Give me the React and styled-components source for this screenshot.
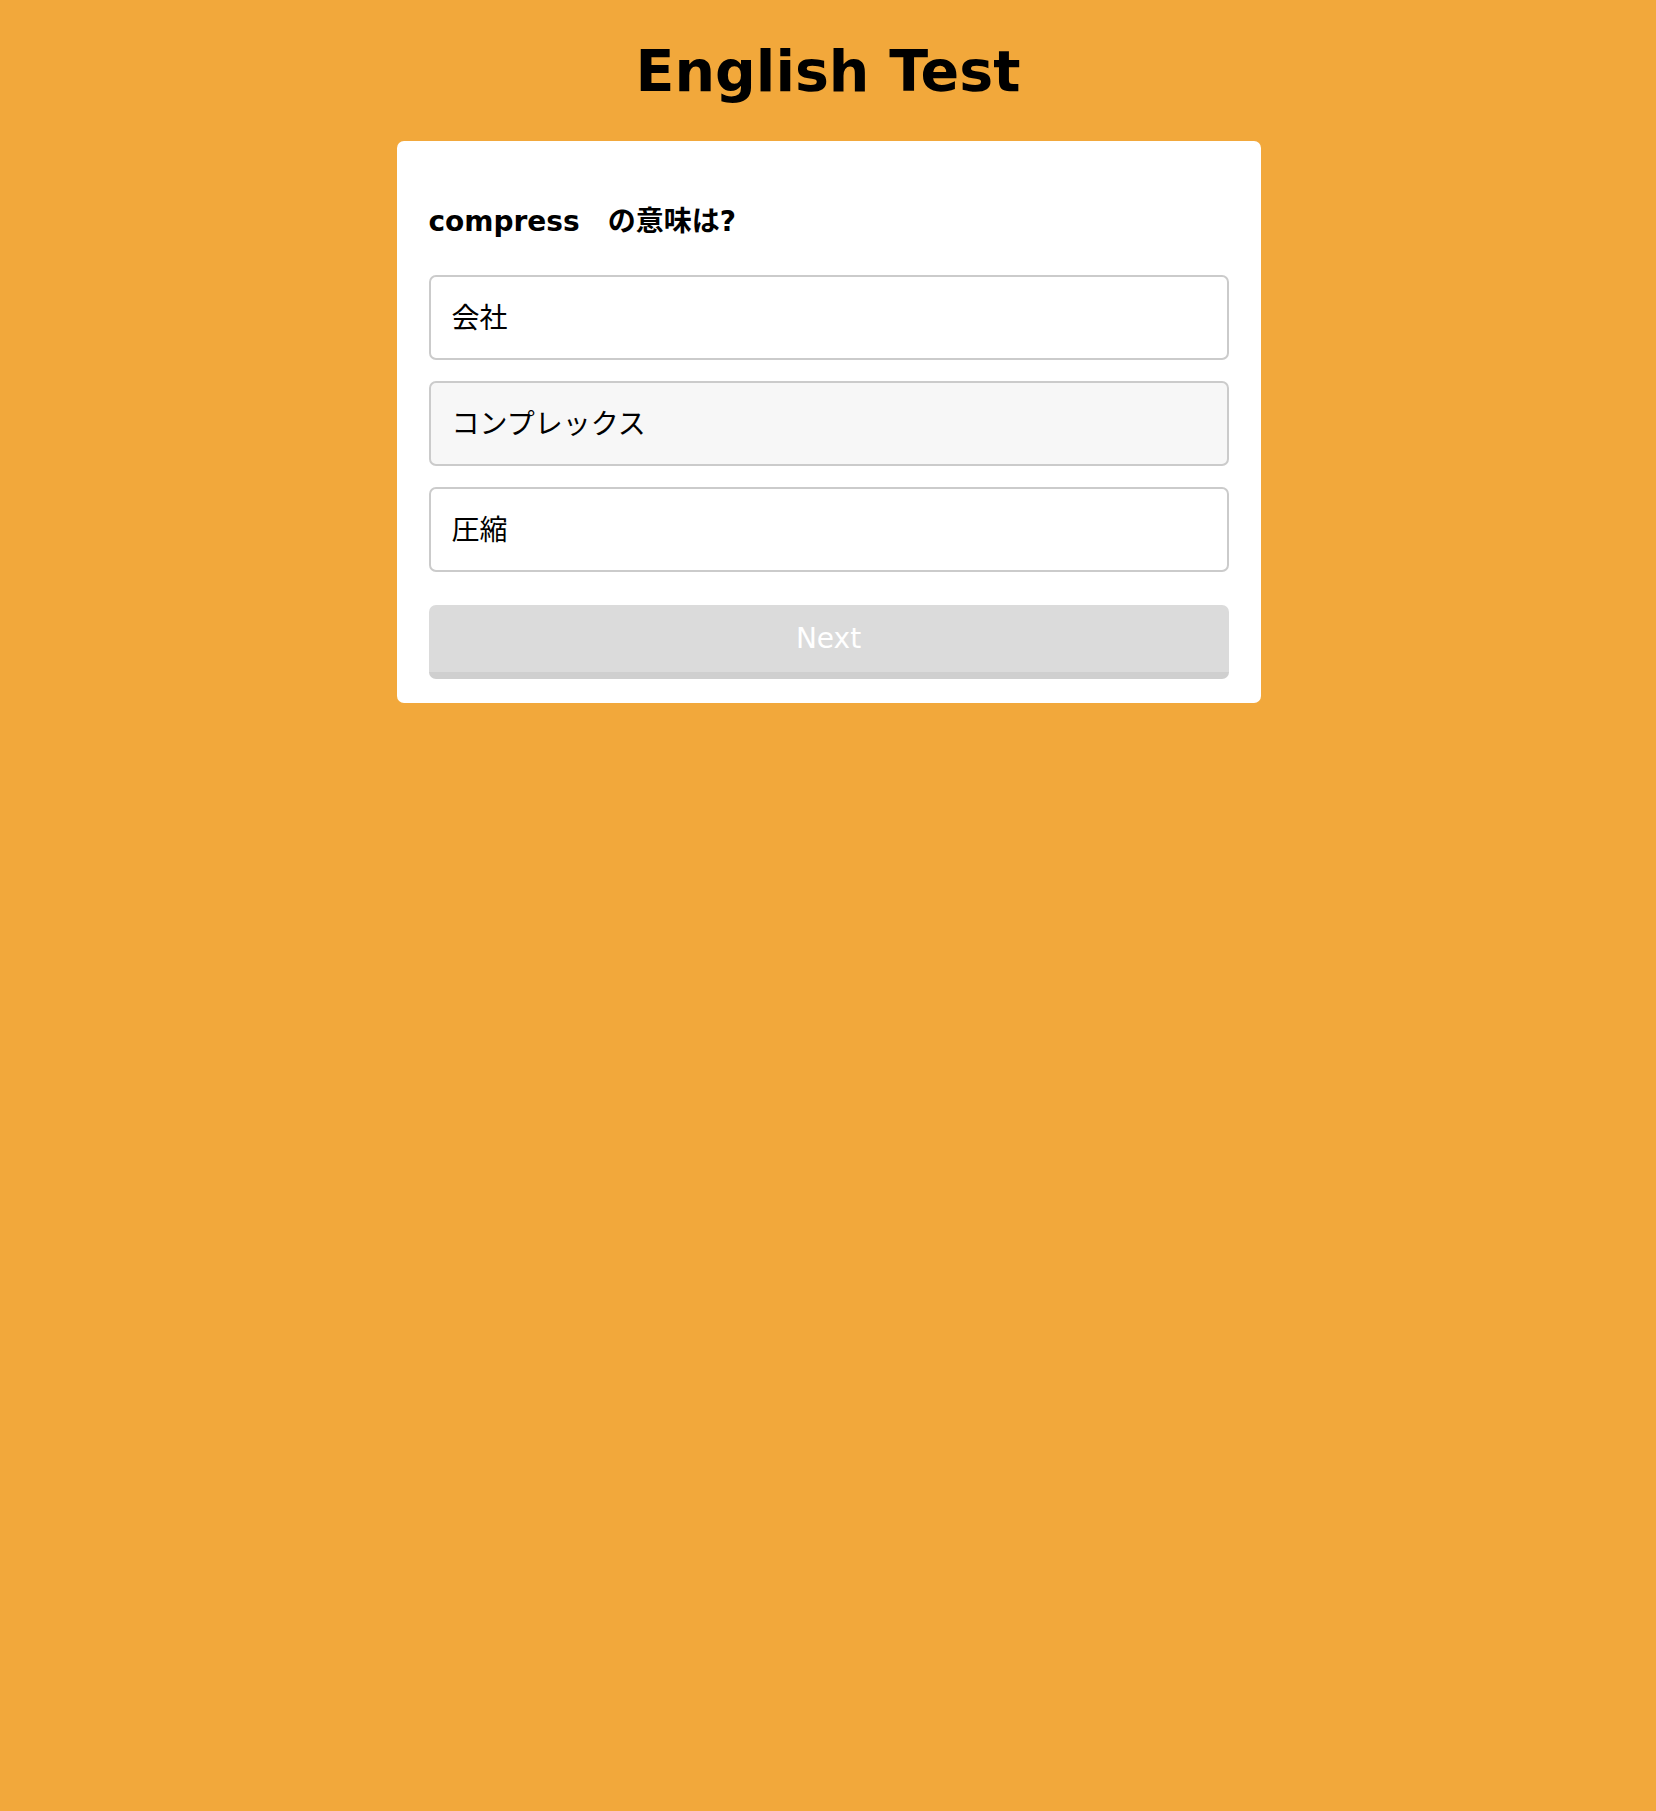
import React, { useState } from 'react';
import styled, { createGlobalStyle } from 'styled-components';

const GlobalStyle = createGlobalStyle`
  html, body {
    margin: 0;
    padding: 0;
    background: #f2a83b;
    min-height: 100%;
  }
  body {
    font-family: "DejaVu Sans", Verdana, "Noto Sans CJK JP", sans-serif;
    color: #000;
  }
`;

const Page = styled.div`
  min-height: 1811px;
  background: #f2a83b;
  display: flex;
  flex-direction: column;
  align-items: center;
  padding-top: 39px;
  box-sizing: border-box;
`;

const Title = styled.h1`
  margin: 0 0 37px;
  font-size: 57px;
  font-weight: bold;
  line-height: 65px;
`;

const Card = styled.div`
  width: 864px;
  box-sizing: border-box;
  background: #fff;
  border-radius: 7px;
  padding: 65px 32px 24px;
  margin-left: 1px;
`;

const Question = styled.h2`
  margin: 0 0 38px;
  font-size: 28px;
  line-height: 31px;
  font-weight: bold;
  font-family: "DejaVu Sans", "Noto Sans CJK JP", sans-serif;
`;

const Options = styled.div`
  display: flex;
  flex-direction: column;
  gap: 21px;
`;

const Option = styled.button`
  height: 85px;
  width: 100%;
  box-sizing: border-box;
  display: flex;
  align-items: center;
  padding: 0 21px 4px;
  border: 2px solid #cbcbcb;
  border-radius: 7px;
  background: ${p => (p.$active ? '#f7f7f7' : '#fff')};
  font-family: "DejaVu Sans", "Noto Sans CJK JP", sans-serif;
  font-size: 28px;
  color: #000;
  text-align: left;
  cursor: pointer;
`;

const NextButton = styled.button`
  margin-top: 33px;
  width: 100%;
  height: 74px;
  box-sizing: border-box;
  border: none;
  border-bottom: 7px solid #cfcfcf;
  border-radius: 7px;
  background: #dbdbdb;
  color: #fff;
  font-family: "DejaVu Sans", sans-serif;
  font-size: 28px;
  padding: 0;
  display: flex;
  align-items: center;
  justify-content: center;
`;

const choices = ['会社', 'コンプレックス', '圧縮'];

export default function App() {
  const [hovered, setHovered] = useState(1);

  return (
    <Page>
      <GlobalStyle />
      <Title>English Test</Title>
      <Card>
        <Question>compress　の意味は?</Question>
        <Options>
          {choices.map((c, i) => (
            <Option
              key={c}
              $active={hovered === i}
              onMouseEnter={() => setHovered(i)}
            >
              {c}
            </Option>
          ))}
        </Options>
        <NextButton disabled>Next</NextButton>
      </Card>
    </Page>
  );
}
